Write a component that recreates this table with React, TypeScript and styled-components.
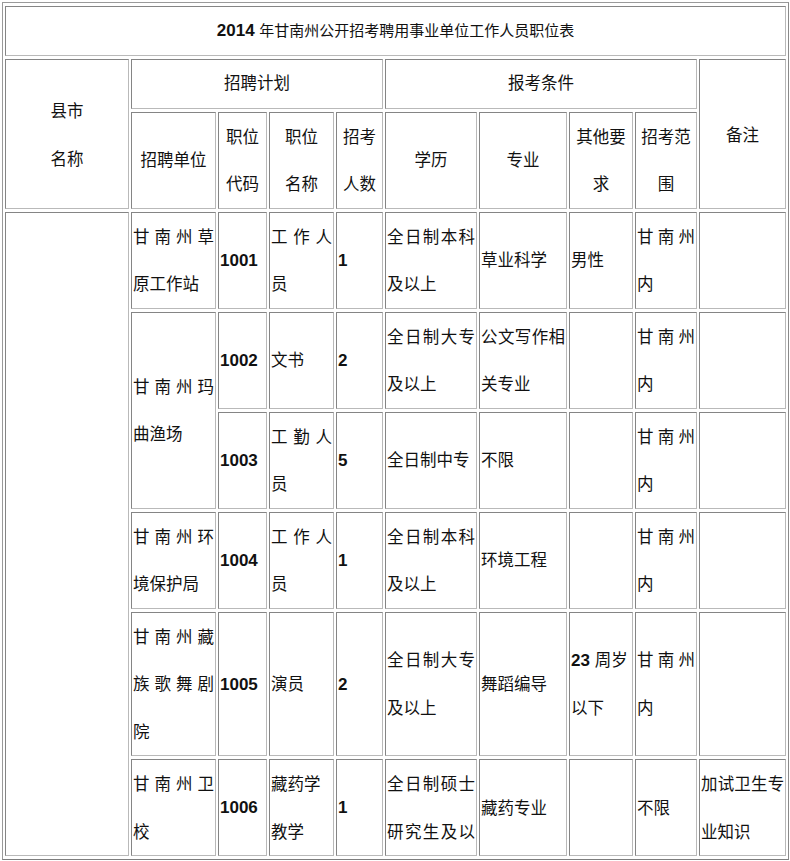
import React from "react";
import styled, { createGlobalStyle } from "styled-components";

const GlobalStyle = createGlobalStyle`
  html, body {
    margin: 0;
    padding: 0;
    background: #ffffff;
  }
  body {
    font-family: "Noto Sans CJK SC", sans-serif;
    color: #111111;
  }
`;

const COLS = [124, 85, 49, 65, 47, 92, 88, 64, 62, 87];

const Page = styled.div`
  width: 790px;
  height: 861px;
  overflow: hidden;
  box-sizing: border-box;
  padding: 2px 0 0 2px;
`;

const Table = styled.table`
  table-layout: fixed;
  border-collapse: separate;
  border-spacing: 2px 3px;
  width: 787px;
  border: 1px solid #9a9a9a;
  border-right-color: #8a8a8a;
  border-bottom-color: #7e7e7e;
  font-size: 16.5px;
  line-height: 47.5px;
`;

const Col = styled.col<{ $w: number }>`
  width: ${(p) => p.$w}px;
`;

const Cell = styled.td<{ $align?: "center" | "justify" | "left"; $lh?: number }>`
  border: 1px solid;
  border-color: #858585 #b9b9b9 #b9b9b9 #858585;
  padding: 0 1px;
  vertical-align: middle;
  text-align: ${(p) => p.$align ?? "justify"};
  text-justify: inter-character;
  line-height: ${(p) => (p.$lh ? `${p.$lh}px` : "inherit")};
  word-break: break-all;
  overflow: hidden;
`;

const GroupCell = styled(Cell)`
  text-align: center;
  line-height: 45px;
  padding-bottom: 3px;
`;

const TitleCell = styled(Cell)`
  text-align: center;
  font-size: 15px;
  line-height: 46.5px;
`;

const Num = styled.span`
  font-family: "Liberation Sans", Arial, sans-serif;
  font-size: 17px;
  font-weight: 700;
`;

const Clip = styled.div`
  max-height: 95px;
  overflow: hidden;
`;

type Row = {
  unit?: string;
  unitSpan?: number;
  code: string;
  post: React.ReactNode;
  count: string;
  edu: string;
  major: string;
  other?: React.ReactNode;
  scope: string;
  note?: string;
  clipEdu?: boolean;
};

const rows: Row[] = [
  {
    unit: "甘南州草原工作站",
    code: "1001",
    post: "工作人员",
    count: "1",
    edu: "全日制本科及以上",
    major: "草业科学",
    other: "男性",
    scope: "甘南州内",
  },
  {
    unit: "甘南州玛曲渔场",
    unitSpan: 2,
    code: "1002",
    post: "文书",
    count: "2",
    edu: "全日制大专及以上",
    major: "公文写作相关专业",
    scope: "甘南州内",
  },
  {
    code: "1003",
    post: "工勤人员",
    count: "5",
    edu: "全日制中专",
    major: "不限",
    scope: "甘南州内",
  },
  {
    unit: "甘南州环境保护局",
    code: "1004",
    post: "工作人员",
    count: "1",
    edu: "全日制本科及以上",
    major: "环境工程",
    scope: "甘南州内",
  },
  {
    unit: "甘南州藏族歌舞剧院",
    code: "1005",
    post: "演员",
    count: "2",
    edu: "全日制大专及以上",
    major: "舞蹈编导",
    other: (
      <>
        <Num>23&nbsp;</Num>周岁
        <br />
        以下
      </>
    ),
    scope: "甘南州内",
  },
  {
    unit: "甘南州卫校",
    code: "1006",
    post: (
      <>
        藏药学
        <br />
        教学
      </>
    ),
    count: "1",
    edu: "全日制硕士研究生及以上",
    major: "藏药专业",
    scope: "不限",
    note: "加试卫生专业知识",
    clipEdu: true,
  },
];

export default function App() {
  return (
    <>
      <GlobalStyle />
      <Page>
        <Table>
          <colgroup>
            {COLS.map((w, i) => (
              <Col key={i} $w={w} />
            ))}
          </colgroup>
          <tbody>
            <tr>
              <TitleCell colSpan={10}>
                <Num>2014 </Num>年甘南州公开招考聘用事业单位工作人员职位表
              </TitleCell>
            </tr>
            <tr>
              <Cell rowSpan={2} $align="center" $lh={48}>
                县市
                <br />
                名称
              </Cell>
              <GroupCell colSpan={4}>招聘计划</GroupCell>
              <GroupCell colSpan={4}>报考条件</GroupCell>
              <Cell rowSpan={2} $align="center" $lh={48}>
                备注
              </Cell>
            </tr>
            <tr>
              <Cell $align="center">招聘单位</Cell>
              <Cell $align="center">职位代码</Cell>
              <Cell $align="center">
                职位
                <br />
                名称
              </Cell>
              <Cell $align="center">招考人数</Cell>
              <Cell $align="center">学历</Cell>
              <Cell $align="center">专业</Cell>
              <Cell $align="center">其他要求</Cell>
              <Cell $align="center">招考范围</Cell>
            </tr>
            {rows.map((r, i) => (
              <tr key={r.code}>
                {i === 0 && <Cell rowSpan={rows.length} />}
                {r.unit && <Cell rowSpan={r.unitSpan ?? 1}>{r.unit}</Cell>}
                <Cell>
                  <Num>{r.code}</Num>
                </Cell>
                <Cell>{r.post}</Cell>
                <Cell>
                  <Num>{r.count}</Num>
                </Cell>
                <Cell>{r.clipEdu ? <Clip>{r.edu}</Clip> : r.edu}</Cell>
                <Cell>{r.major}</Cell>
                <Cell $align="left">{r.other}</Cell>
                <Cell>{r.scope}</Cell>
                <Cell>{r.note}</Cell>
              </tr>
            ))}
          </tbody>
        </Table>
      </Page>
    </>
  );
}
